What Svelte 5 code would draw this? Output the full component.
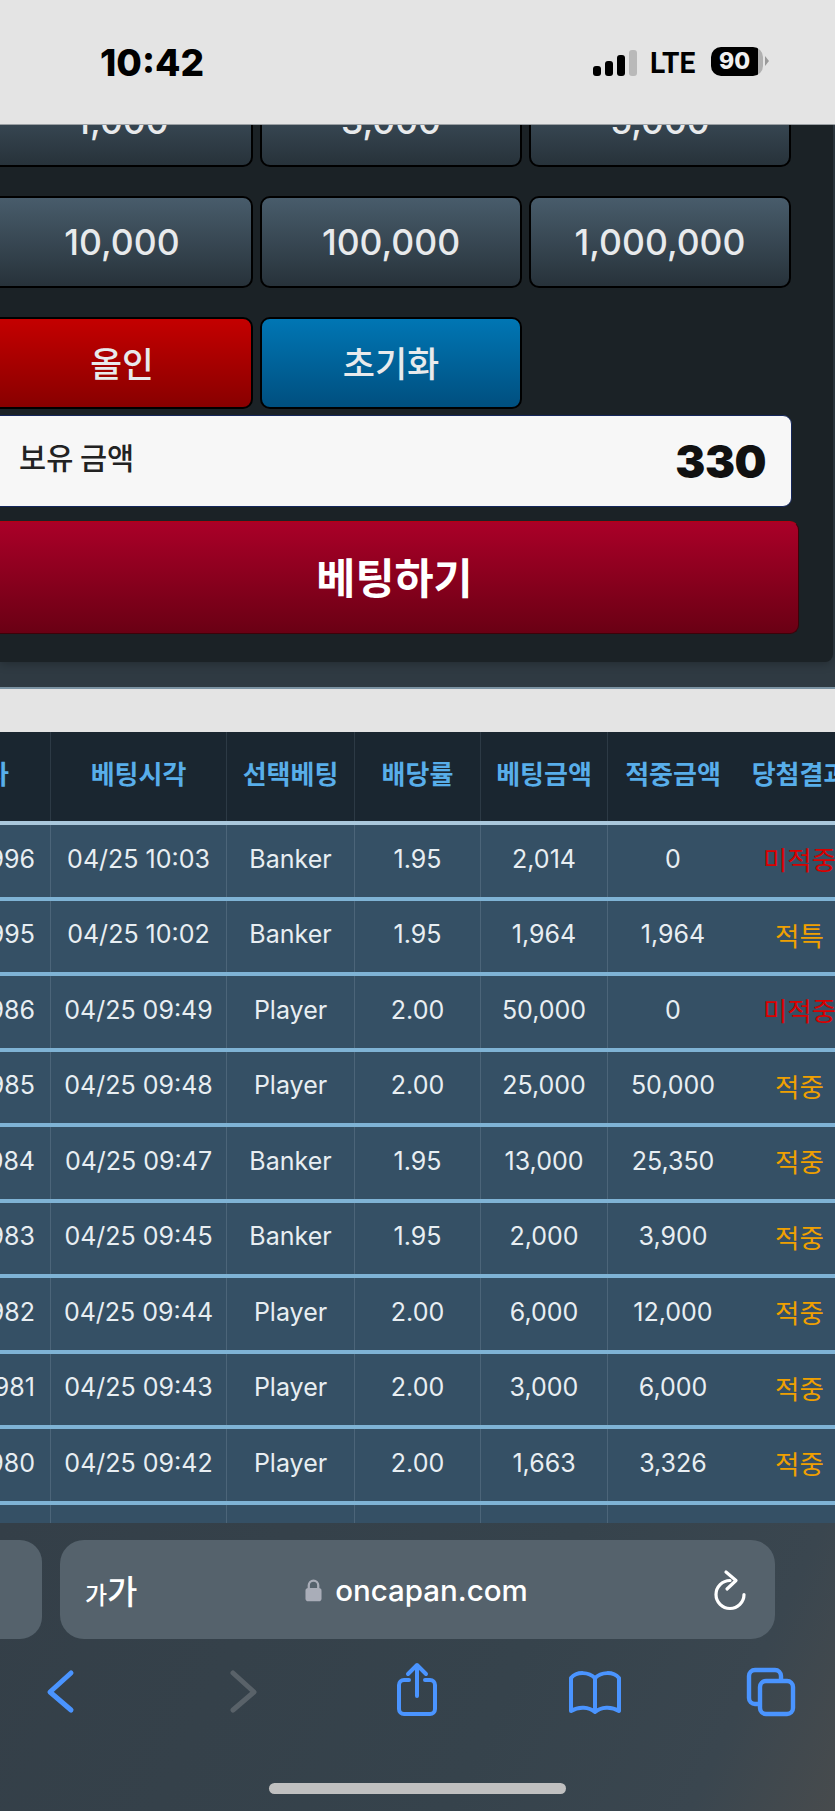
<script>
  const amounts = ['1,000', '3,000', '5,000', '10,000', '100,000', '1,000,000'];

  const columns = ['회차', '베팅시각', '선택베팅', '배당률', '베팅금액', '적중금액', '당첨결과'];

  const rows = [
    ['996', '04/25 10:03', 'Banker', '1.95', '2,014', '0', '미적중'],
    ['995', '04/25 10:02', 'Banker', '1.95', '1,964', '1,964', '적특'],
    ['986', '04/25 09:49', 'Player', '2.00', '50,000', '0', '미적중'],
    ['985', '04/25 09:48', 'Player', '2.00', '25,000', '50,000', '적중'],
    ['984', '04/25 09:47', 'Banker', '1.95', '13,000', '25,350', '적중'],
    ['983', '04/25 09:45', 'Banker', '1.95', '2,000', '3,900', '적중'],
    ['982', '04/25 09:44', 'Player', '2.00', '6,000', '12,000', '적중'],
    ['981', '04/25 09:43', 'Player', '2.00', '3,000', '6,000', '적중'],
    ['980', '04/25 09:42', 'Player', '2.00', '1,663', '3,326', '적중'],
    ['', '', '', '', '', '', '']
  ];
</script>

<div class="screen">
  <header class="status">
    <span class="time">10:42</span>
    <div class="status-right">
      <div class="signal">
        <i class="b1"></i><i class="b2"></i><i class="b3"></i><i class="b4"></i>
      </div>
      <span class="lte">LTE</span>
      <div class="battery"><span>90</span></div>
      <div class="nub"></div>
    </div>
  </header>

  <section class="backdrop">
    <div class="panel">
      <div class="buttons">
        {#each amounts as amount}
          <button class="chip">{amount}</button>
        {/each}
        <button class="chip allin">올인</button>
        <button class="chip reset">초기화</button>
      </div>
      <div class="balance">
        <span class="balance-label">보유 금액</span>
        <span class="balance-value">330</span>
      </div>
      <button class="bet">베팅하기</button>
    </div>
  </section>

  <div class="gap"></div>

  <section class="table">
    <div class="row head">
      {#each columns as col, i}
        <div class="cell" class:first={i === 0} class:open={i === 5}>{col}</div>
      {/each}
    </div>
    {#each rows as row}
      <div class="row">
        {#each row as value, i}
          <div
            class="cell"
            class:first={i === 0}
            class:open={i === 5}
            class:miss={value === '미적중'}
            class:hit={value === '적중' || value === '적특'}
          >{value}</div>
        {/each}
      </div>
    {/each}
  </section>

  <footer class="chrome">
    <div class="address-row">
      <div class="prev-tab"></div>
      <div class="address">
        <span class="aa"><small>가</small>가</span>
        <div class="url">
          <svg width="17" height="24" viewBox="0 0 18 24">
            <path d="M4 11V7a5 5 0 0 1 10 0v4" fill="none" stroke="#a9adb8" stroke-width="2.4" />
            <rect x="0.5" y="10" width="17" height="14" rx="3" fill="#a9adb8" />
          </svg>
          <span>oncapan.com</span>
        </div>
        <svg class="reload" width="36" height="42" viewBox="0 0 36 42">
          <path d="M18 11.5A14 14 0 1 0 32 25.5" fill="none" stroke="#fff" stroke-width="3.2" stroke-linecap="round" />
          <path d="M14 3L24 11.5L15 20" fill="none" stroke="#fff" stroke-width="3.2" stroke-linecap="round" stroke-linejoin="round" />
        </svg>
      </div>
    </div>

    <nav class="toolbar">
      <svg width="60" height="60" viewBox="0 0 60 60">
        <path d="M41 11L20 30L41 48" fill="none" stroke="#4a94ff" stroke-width="5" stroke-linecap="round" stroke-linejoin="round" />
      </svg>
      <svg width="60" height="60" viewBox="0 0 60 60">
        <path d="M25 11L46 30L25 48" fill="none" stroke="#596269" stroke-width="5" stroke-linecap="round" stroke-linejoin="round" />
      </svg>
      <svg width="60" height="60" viewBox="0 0 60 60">
        <g fill="none" stroke="#4a94ff" stroke-width="4" stroke-linecap="round" stroke-linejoin="round">
          <path d="M24 18H19a5 5 0 0 0-5 5V47a5 5 0 0 0 5 5H45a5 5 0 0 0 5-5V23a5 5 0 0 0-5-5H40" />
          <path d="M32 34V4M23 12L32 3L41 12" />
        </g>
      </svg>
      <svg width="60" height="60" viewBox="0 0 60 60">
        <path d="M32 16C26 10 14 9 8 16V49C16 44 26 45 32 50C38 45 48 44 56 49V16C50 9 38 10 32 16V48" fill="none" stroke="#4a94ff" stroke-width="4" stroke-linejoin="round" stroke-linecap="round" />
      </svg>
      <svg width="60" height="60" viewBox="0 0 60 60">
        <g fill="none" stroke="#4a94ff" stroke-width="4.4">
          <path d="M41 18V14a6 6 0 0 0-6-6H15a6 6 0 0 0-6 6V36a6 6 0 0 0 6 6H19" />
          <rect x="20" y="19" width="33" height="33" rx="6" />
        </g>
      </svg>
    </nav>

    <div class="home-bar"></div>
  </footer>
</div>

<style>
  :global(body) {
    margin: 0;
    background: #2f3a42;
  }

  .screen {
    width: 835px;
    height: 1811px;
    overflow: hidden;
    display: flex;
    flex-direction: column;
    font-family: "Noto Sans CJK KR", sans-serif;
  }

  /* status bar */
  .status {
    height: 125px;
    flex: none;
    box-sizing: border-box;
    background: #e4e4e4;
    border-bottom: 1px solid #9a9fa3;
    display: flex;
    justify-content: space-between;
    padding: 41px 66px 0 100px;
    color: #000;
  }

  .time {
    font-family: Inter, sans-serif;
    font-weight: 800;
    font-size: 37px;
    line-height: 44px;
  }

  .status-right {
    display: flex;
    align-items: center;
    height: 44px;
    margin-top: -2px;
  }

  .signal {
    display: flex;
    align-items: flex-end;
    gap: 4px;
    height: 26px;
    margin-top: 3px;
    margin-right: 13px;
  }

  .signal i {
    display: block;
    width: 8px;
    border-radius: 3px;
    background: #000;
  }

  .b1 { height: 10px; }
  .b2 { height: 15px; }
  .b3 { height: 21px; }
  .b4 { height: 26px; background: #b9b9b9 !important; }

  .lte {
    font-family: Roboto, sans-serif;
    font-weight: 700;
    font-size: 29px;
    margin-right: 14px;
    margin-top: 4px;
    display: inline-block;
    transform: scaleX(0.97);
    transform-origin: left center;
  }

  .battery {
    width: 52px;
    height: 29px;
    border-radius: 10px;
    background: linear-gradient(to right, #000 90%, #b0b0b0 90%);
    display: flex;
    align-items: center;
    justify-content: center;
    padding-right: 5px;
    box-sizing: border-box;
  }

  .battery span {
    font-family: Inter, sans-serif;
    font-size: 23px;
    font-weight: 800;
    color: #f0f0f0;
  }

  .nub {
    width: 0;
    height: 0;
    margin-left: 2px;
    border-left: 4px solid #9a9a9a;
    border-top: 5px solid transparent;
    border-bottom: 5px solid transparent;
  }

  /* betting panel */
  .backdrop {
    height: 564px;
    flex: none;
    overflow: hidden;
    background: #2f3a42;
    border-bottom: 2px solid #7b93a3;
    box-sizing: border-box;
  }

  .panel {
    width: 833px;
    height: 537px;
    box-sizing: border-box;
    overflow: hidden;
    background: #1b2226;
    border-radius: 0 0 8px 0;
    box-shadow: 0 2px 10px rgba(0, 0, 0, 0.25);
    display: flex;
    flex-direction: column;
    align-items: flex-start;
  }

  .buttons {
    margin: -50px 0 0 -9px;
    display: grid;
    grid-template-columns: repeat(3, 262px);
    grid-auto-rows: 92px;
    column-gap: 7px;
    row-gap: 29px;
  }

  .chip {
    box-sizing: border-box;
    border: 2px solid #000;
    border-radius: 10px;
    background: linear-gradient(#485c6b, #27323a);
    color: #e8eaec;
    font-family: Inter, sans-serif;
    font-size: 35.5px;
    font-weight: 500;
    padding: 0;
  }

  .chip.allin {
    background: linear-gradient(#c40000, #880000);
    font-family: "Noto Sans CJK KR", sans-serif;
    font-size: 34.5px;
    font-weight: 500;
    padding-bottom: 3px;
  }

  .chip.reset {
    background: linear-gradient(#0076b4, #004f7f);
    font-family: "Noto Sans CJK KR", sans-serif;
    font-size: 35px;
    font-weight: 500;
    padding-bottom: 3px;
  }

  .balance {
    box-sizing: border-box;
    width: 802px;
    height: 92px;
    margin: 6px 0 0 -10px;
    padding: 0 25px 0 28px;
    background: #f7f7f7;
    border: 1.5px solid #14265a;
    border-radius: 9px;
    display: flex;
    align-items: center;
    justify-content: space-between;
  }

  .balance-label {
    font-size: 29.5px;
    font-weight: 500;
    color: #222;
    margin-top: -10px;
  }

  .balance-value {
    font-family: Inter, sans-serif;
    font-size: 45px;
    font-weight: 900;
    color: #111;
    letter-spacing: -0.5px;
  }

  .bet {
    box-sizing: border-box;
    width: 809px;
    height: 113px;
    margin: 14px 0 0 -10px;
    padding: 0 0 5px 0;
    border: 1.5px solid #3d0209;
    border-top-color: #b50010;
    border-radius: 9px;
    background: linear-gradient(#aa0028, #6a0014);
    color: #fff;
    font-family: "Noto Sans CJK KR", sans-serif;
    font-size: 42.5px;
    font-weight: 700;
  }

  .gap {
    height: 43px;
    flex: none;
    background: #e4e4e4;
  }

  /* table */
  .table {
    height: 791px;
    flex: none;
    overflow: hidden;
    background: #355065;
    font-family: Inter, "Noto Sans CJK KR", sans-serif;
  }

  .row {
    display: grid;
    grid-template-columns: 51px 176px 128px 126px 127px 130px 124px;
    height: 75.5px;
    box-sizing: border-box;
    border-bottom: 4px solid #7fb3d5;
    color: #e8eef2;
    font-size: 25px;
    width: 862px;
  }

  .row.head {
    height: 93px;
    background: #1a2630;
    border-bottom-color: #a9c7db;
    color: #58aeea;
    font-family: "Noto Sans CJK KR", sans-serif;
    font-size: 26px;
    font-weight: 700;
  }

  .cell {
    display: flex;
    align-items: center;
    justify-content: center;
    border-right: 1px solid #4c6579;
    white-space: nowrap;
    overflow: hidden;
    padding-bottom: 4px;
  }

  .head .cell {
    border-right-color: #2d3a45;
    padding-bottom: 9px;
  }

  .cell.first {
    justify-content: flex-end;
    padding-right: 15px;
  }

  .head .cell.first {
    padding-right: 41px;
  }

  .cell.open {
    border-right: none;
  }

  .cell.miss {
    color: #d80000;
    font-family: "Noto Sans CJK KR", sans-serif;
    font-size: 26.5px;
  }

  .cell.hit {
    color: #f0a000;
    font-family: "Noto Sans CJK KR", sans-serif;
    font-size: 26.5px;
  }

  /* safari chrome */
  .chrome {
    flex: 1;
    background: linear-gradient(115deg, #343f48 0%, #36434c 60%, #3a464f 85%, #474b4d 100%);
    padding-top: 17px;
    box-sizing: border-box;
  }

  .address-row {
    display: flex;
    gap: 18px;
    margin-left: -20px;
    height: 99px;
  }

  .prev-tab {
    width: 62px;
    background: #55626c;
    border-radius: 22px;
  }

  .address {
    width: 715px;
    box-sizing: border-box;
    background: #55626c;
    border-radius: 24px;
    display: grid;
    grid-template-columns: 1fr auto 1fr;
    align-items: center;
    padding: 0 27px 0 25px;
    color: #fff;
  }

  .aa {
    font-size: 33px;
    font-weight: 500;
  }

  .aa small {
    font-size: 24px;
  }

  .url {
    display: flex;
    align-items: center;
    gap: 13px;
    font-family: Inter, sans-serif;
    font-size: 29.5px;
    font-weight: 500;
  }

  .reload {
    justify-self: end;
    margin-right: 0;
  }

  .toolbar {
    display: flex;
    justify-content: space-between;
    padding: 23px 35px 0 30px;
  }

  .home-bar {
    width: 297px;
    height: 11px;
    border-radius: 6px;
    background: #c0c0c0;
    margin: 61px auto 0;
  }
</style>
